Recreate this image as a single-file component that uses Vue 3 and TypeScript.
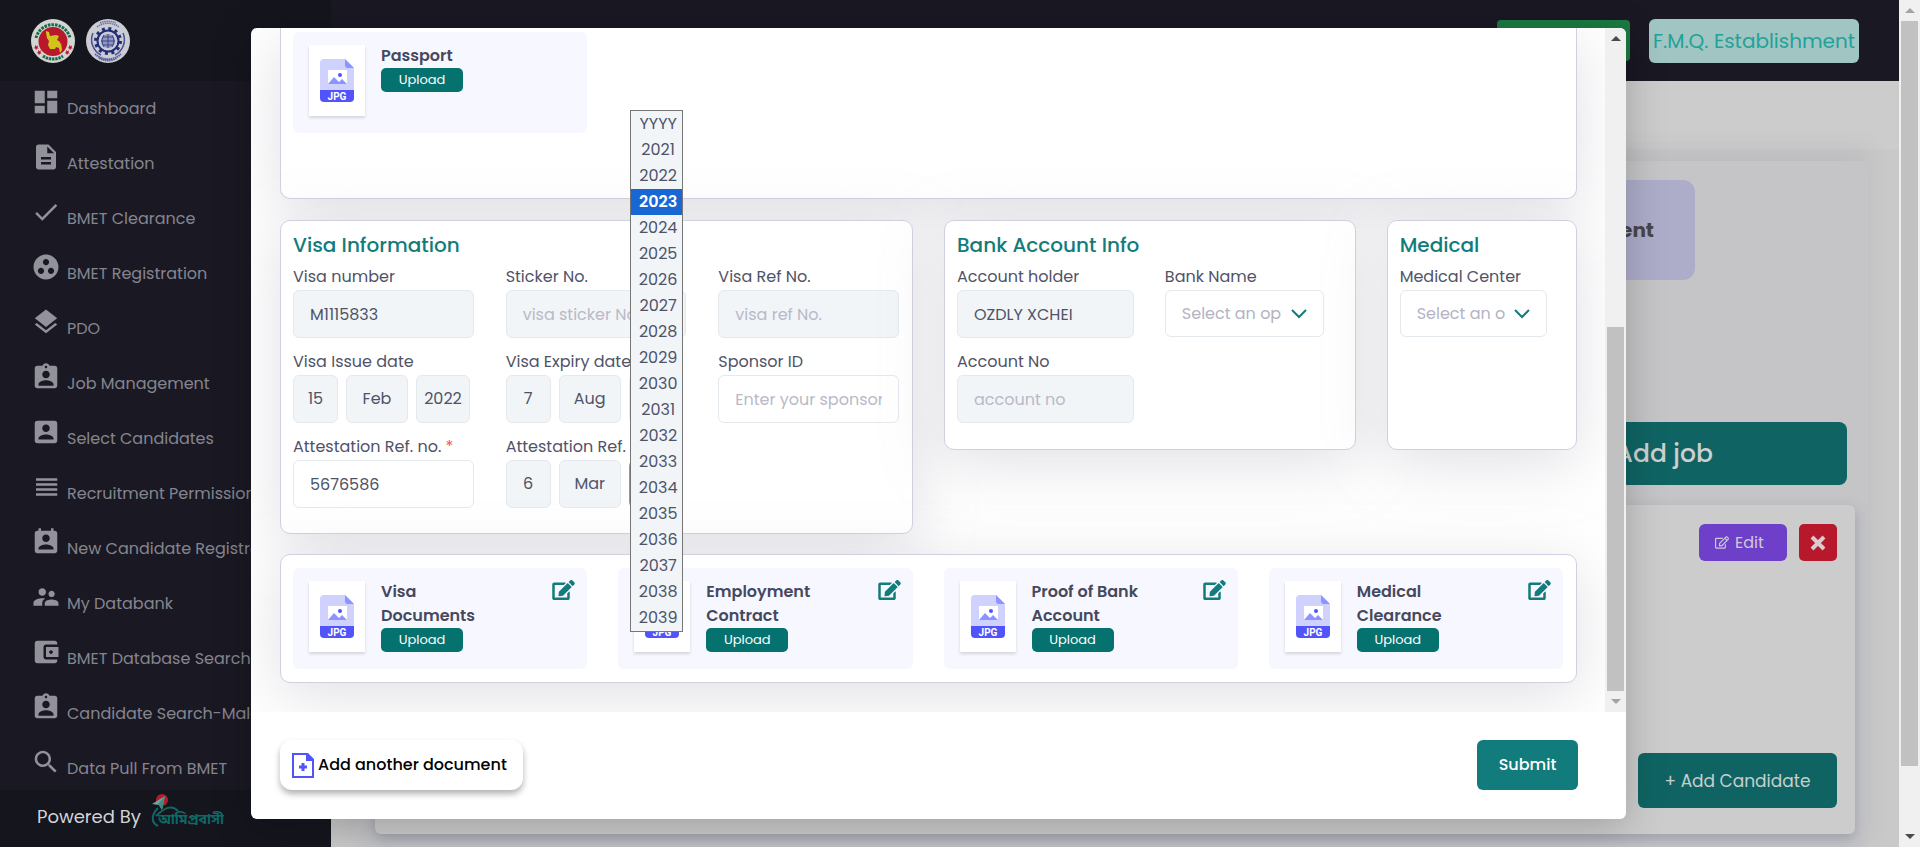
<script setup lang="ts">
import { ref } from 'vue'

interface NavItem { label: string; path: string }

const assignmentInd = 'M19 3h-4.18C14.4 1.84 13.3 1 12 1c-1.3 0-2.4.84-2.82 2H5c-1.1 0-2 .9-2 2v14c0 1.1.9 2 2 2h14c1.1 0 2-.9 2-2V5c0-1.1-.9-2-2-2zm-7 0c.55 0 1 .45 1 1s-.45 1-1 1-1-.45-1-1 .45-1 1-1zm0 4c1.66 0 3 1.34 3 3s-1.34 3-3 3-3-1.34-3-3 1.34-3 3-3zm6 12H6v-1.4c0-2 4-3.1 6-3.1s6 1.1 6 3.1V19z'

const navItems: NavItem[] = [
  { label: 'Dashboard', path: 'M3 13h8V3H3v10zm0 8h8v-6H3v6zm10 0h8V11h-8v10zm0-18v6h8V3h-8z' },
  { label: 'Attestation', path: 'M14 2H6c-1.1 0-1.99.9-1.99 2L4 20c0 1.1.89 2 1.99 2H18c1.1 0 2-.9 2-2V8l-6-6zm2 16H8v-2h8v2zm0-4H8v-2h8v2zm-3-5V3.5L18.5 9H13z' },
  { label: 'BMET Clearance', path: 'M9 16.2L4.8 12l-1.4 1.4L9 19 21 7l-1.4-1.4L9 16.2z' },
  { label: 'BMET Registration', path: 'M12 2C6.48 2 2 6.48 2 12s4.48 10 10 10 10-4.48 10-10S17.52 2 12 2zM8 17.5c-1.38 0-2.5-1.12-2.5-2.5s1.12-2.5 2.5-2.5 2.5 1.12 2.5 2.5-1.12 2.5-2.5 2.5zM9.5 8c0-1.38 1.12-2.5 2.5-2.5s2.5 1.12 2.5 2.5-1.12 2.5-2.5 2.5S9.5 9.38 9.5 8zm6.5 9.5c-1.38 0-2.5-1.12-2.5-2.5s1.12-2.5 2.5-2.5 2.5 1.12 2.5 2.5-1.12 2.5-2.5 2.5z' },
  { label: 'PDO', path: 'M11.99 18.54l-7.37-5.73L3 14.07l9 7 9-7-1.63-1.27-7.38 5.74zM12 16l7.36-5.73L21 9l-9-7-9 7 1.63 1.27L12 16z' },
  { label: 'Job Management', path: assignmentInd },
  { label: 'Select Candidates', path: 'M3 5v14c0 1.1.89 2 2 2h14c1.1 0 2-.9 2-2V5c0-1.1-.9-2-2-2H5c-1.11 0-2 .9-2 2zm12 4c0 1.66-1.34 3-3 3s-3-1.34-3-3 1.34-3 3-3 3 1.34 3 3zm-9 8c0-2 4-3.1 6-3.1s6 1.1 6 3.1v1H6v-1z' },
  { label: 'Recruitment Permission', path: 'M4 15h17v-2H4v2zm0 4h17v-2H4v2zm0-8h17V9H4v2zm0-6v2h17V5H4z' },
  { label: 'New Candidate Registration', path: 'M19 3h-1V1h-2v2H8V1H6v2H5c-1.11 0-2 .9-2 2v14c0 1.1.89 2 2 2h14c1.1 0 2-.9 2-2V5c0-1.1-.9-2-2-2zm-7 3c1.66 0 3 1.34 3 3s-1.34 3-3 3-3-1.34-3-3 1.34-3 3-3zm6 12H6v-1c0-2 4-3.1 6-3.1s6 1.1 6 3.1v1z' },
  { label: 'My Databank', path: 'M16.5 12c1.38 0 2.49-1.12 2.49-2.5S17.88 7 16.5 7C15.12 7 14 8.12 14 9.5s1.12 2.5 2.5 2.5zM9 11c1.66 0 2.99-1.34 2.99-3S10.66 5 9 5C7.34 5 6 6.34 6 8s1.34 3 3 3zm7.5 3c-1.83 0-5.5.92-5.5 2.75V19h11v-2.25c0-1.83-3.67-2.75-5.5-2.75zM9 13c-2.33 0-7 1.17-7 3.5V19h7v-2.25c0-.85.33-2.34 2.37-3.47C10.5 13.1 9.66 13 9 13z' },
  { label: 'BMET Database Search', path: 'M21 18v1c0 1.1-.9 2-2 2H5c-1.11 0-2-.9-2-2V5c0-1.1.89-2 2-2h14c1.1 0 2 .9 2 2v1h-9c-1.11 0-2 .9-2 2v8c0 1.1.89 2 2 2h9zm-9-2h10V8H12v8zm4-2.5c-.83 0-1.5-.67-1.5-1.5s.67-1.5 1.5-1.5 1.5.67 1.5 1.5-.67 1.5-1.5 1.5z' },
  { label: 'Candidate Search-Male', path: assignmentInd },
  { label: 'Data Pull From BMET', path: 'M15.5 14h-.79l-.28-.27C15.41 12.59 16 11.11 16 9.5 16 5.91 13.09 3 9.5 3S3 5.91 3 9.5 5.91 16 9.5 16c1.61 0 3.09-.59 4.23-1.57l.27.28v.79l5 4.99L20.49 19l-4.99-5zm-6 0C7.01 14 5 11.99 5 9.5S7.01 5 9.5 5 14 7.01 14 9.5 11.99 14 9.5 14z' },
]

const editPath = 'M402.6 83.2l90.2 90.2c3.8 3.8 3.8 10 0 13.8L274.4 405.6l-92.8 10.3c-12.4 1.4-22.9-9.1-21.5-21.5l10.3-92.8L388.8 83.2c3.8-3.8 10-3.8 13.8 0zm162-22.9l-48.8-48.8c-15.2-15.2-39.9-15.2-55.2 0l-35.4 35.4c-3.8 3.8-3.8 10 0 13.8l90.2 90.2c3.8 3.8 10 3.8 13.8 0l35.4-35.4c15.2-15.3 15.2-40 0-55.2zM384 346.2V448H64V128h229.8c3.2 0 6.2-1.3 8.5-3.5l40-40c7.6-7.6 2.2-20.5-8.5-20.5H48C21.5 64 0 85.5 0 112v352c0 26.5 21.5 48 48 48h352c26.5 0 48-21.5 48-48V306.2c0-10.7-12.9-16-20.5-8.5l-40 40c-2.2 2.3-3.5 5.3-3.5 8.5z'
const editOutlinePath = 'M402.3 344.9l32-32c5-5 13.7-1.5 13.7 5.7V464c0 26.5-21.5 48-48 48H48c-26.5 0-48-21.5-48-48V112c0-26.5 21.5-48 48-48h273.5c7.1 0 10.7 8.6 5.7 13.7l-32 32c-1.5 1.5-3.5 2.3-5.7 2.3H48v352h352V350.5c0-2.1.8-4.1 2.3-5.6zm156.6-201.8L296.3 405.7l-90.4 10c-26.2 2.9-48.5-19.2-45.6-45.6l10-90.4L432.9 17.1c22.9-22.9 59.9-22.9 82.7 0l43.2 43.2c22.9 22.9 22.9 60 .1 82.8zM460.1 174L402 115.9 216.2 301.8l-7.3 65.3 65.3-7.3L460.1 174zm64.8-79.7l-43.2-43.2c-4.1-4.1-10.8-4.1-14.8 0L436 82l58.1 58.1 30.9-30.9c4-4.2 4-10.8-.1-14.9z'

const passportDocs = [{ lines: ['Passport'], editable: false }]
const visaDocs = [
  { lines: ['Visa', 'Documents'], editable: true },
  { lines: ['Employment', 'Contract'], editable: true },
  { lines: ['Proof of Bank', 'Account'], editable: true },
  { lines: ['Medical', 'Clearance'], editable: true },
]
const docSections = { passport: passportDocs, visa: visaDocs }

const years: string[] = ['YYYY', ...Array.from({ length: 19 }, (_, i) => String(2021 + i))]
const visaNumber = ref('M1115833')
const attestationRef = ref('5676586')
const accountHolder = ref('OZDLY XCHEI')
const attestationYear = ref('2023')
</script>

<template>
  <div class="page">
    <aside class="sidebar">
      <div class="brand">
        <svg width="44" height="44" viewBox="0 0 44 44" role="img" aria-label="Government seal">
          <circle cx="22" cy="22" r="22" fill="#d3d5d2" />
          <path d="M5 19a17.500 17.500 0 0 1 34 0" fill="none" stroke="#1b6a4c" stroke-width="3" stroke-dasharray="2.600 1" />
          <path d="M12 37a18 18 0 0 0 20 0" fill="none" stroke="#1b6a4c" stroke-width="3" stroke-dasharray="2.4 .8" />
          <circle cx="22" cy="22.5" r="14.5" fill="#b7192b" />
          <path d="M15 12l3 1 1 4 6-1 3 1-2 4 3 2v3l1-3 1 8-2 3-1-5-3-1-1 2-5 0-2-4 1-4-2-3-1-5z" fill="#d2c21c" />
          <path d="M4 26l1.5 1.2 1.5-1-.5 2 1.3 1.2-1.8.2-1 1.7-.6-1.9-1.7-.4 1.5-1zM7 31l1.5 1.2 1.5-1-.5 2 1.3 1.2-1.8.2-1 1.7-.6-1.9-1.7-.4 1.5-1zM38 26l1.5 1.2 1.5-1-.5 2 1.3 1.2-1.8.2-1 1.7-.6-1.9-1.7-.4 1.5-1zM35 31l1.5 1.2 1.5-1-.5 2 1.3 1.2-1.8.2-1 1.7-.6-1.9-1.7-.4 1.5-1z" fill="#b7192b" />
        </svg>
        <svg width="44" height="44" viewBox="0 0 44 44" role="img" aria-label="Bureau seal">
          <circle cx="22" cy="22" r="22" fill="#cccdd2" />
          <path d="M7 14a17 17 0 0 0 8 22M37 14a17 17 0 0 1-8 22" fill="none" stroke="#4a5195" stroke-width="1.500" />
          <path d="M11 8a18 18 0 0 1 22 0M14 4a20 20 0 0 1 16 0" fill="none" stroke="#6c72a8" stroke-width="1.500" stroke-dasharray="1.5 .7" />
          <path d="M9 35a19 19 0 0 0 26 0M13 39a18 18 0 0 0 18 0" fill="none" stroke="#5a61a0" stroke-width="2" stroke-dasharray="1.5 .6" />
          <circle cx="22" cy="22" r="12.5" fill="none" stroke="#222d78" stroke-width="3" stroke-dasharray="3 3.54" />
          <circle cx="22" cy="22" r="10.5" fill="none" stroke="#222d78" stroke-width="2" />
          <circle cx="22" cy="22" r="7" fill="#9397bd" />
          <path d="M15 22h14M17 18h10M17 26h10M22 15v14M18 16q-4 6 0 12M26 16q4 6 0 12" fill="none" stroke="#3c4590" stroke-width="1" />
        </svg>
      </div>
      <nav class="nav" aria-label="Main">
        <a v-for="item in navItems" :key="item.label" class="nav-item" href="#">
          <svg class="nav-icon" viewBox="0 0 24 24" aria-hidden="true"><path :d="item.path" fill="currentColor" /></svg>
          <span class="nav-label">{{ item.label }}</span>
        </a>
      </nav>
      <div class="powered">
        <span>Powered By</span>
        <svg class="partner" width="68" height="40" viewBox="0 0 68 40" role="img" aria-label="Ami Probashi">
          <circle cx="10" cy="6" r="6" fill="#b01c2c" />
          <path d="M0 10L13 2l-3 14-3-5-7-1z" fill="#6fa69b" />
          <path d="M6 10l7-8-3 14z" fill="#3f8a80" />
          <path d="M6 14c-6 6-8 14 0 18M4 22c8-8 16-12 22-5" fill="none" stroke="#0f6865" stroke-width="2" />
          <text x="6" y="30" font-size="14" font-weight="700" fill="#0f6865" font-family="'Noto Sans Bengali', 'Noto Sans', sans-serif">আমিপ্রবাসী</text>
        </svg>
      </div>
    </aside>

    <main class="main">
      <header class="topbar">
        <button class="top-green" type="button" aria-label="Recruitment"></button>
        <button class="top-user" type="button">F.M.Q. Establishment</button>
      </header>
      <div class="subbar"></div>
      <div class="content">
        <a class="tile" href="#">Recruitment</a>
        <button class="add-job" type="button">+ Add job</button>
        <section class="job-card">
          <div class="job-actions">
            <button class="edit-btn" type="button">
              <svg width="14" height="13" viewBox="0 0 576 512" aria-hidden="true"><path :d="editOutlinePath" fill="currentColor" /></svg>
              Edit
            </button>
            <button class="delete-btn" type="button" aria-label="Delete">
              <svg width="16" height="16" viewBox="0 0 16 16" aria-hidden="true"><path d="M2 2l12 12M14 2L2 14" stroke="currentColor" stroke-width="4" /></svg>
            </button>
          </div>
          <button class="add-candidate" type="button">+ Add Candidate</button>
        </section>
      </div>
    </main>

    <div class="bar bar-page" aria-hidden="true">
      <i class="arrow up muted"></i>
      <i class="thumb thumb-page"></i>
      <i class="arrow down push"></i>
    </div>

    <div class="overlay">
      <div class="modal" role="dialog" aria-label="Candidate documents">
        <div class="modal-body">
          <div class="scroll">
            <section class="panel panel-top docs">
              <article v-for="doc in docSections.passport" :key="doc.lines[0]" class="doc">
                <div class="thumb-box">
                  <svg width="34" height="43" viewBox="0 0 34 43" aria-hidden="true">
                    <path d="M4 0h21l9 9v22H0V4q0-4 4-4z" fill="#cfd1ff" />
                    <path d="M25 0l9 9h-6q-3 0-3-3z" fill="#8b94ff" />
                    <path d="M0 31h34v8q0 4-4 4H4q-4 0-4-4z" fill="#5254fb" />
                    <path d="M8 11h19v14H8z" fill="#fff" />
                    <path d="M8 25l6-7 5 5 3-3 5 5z" fill="#8b94ff" />
                    <circle cx="20" cy="16" r="2" fill="#5254fb" />
                    <text class="jpg" x="17" y="41" text-anchor="middle">JPG</text>
                  </svg>
                </div>
                <div class="doc-info">
                  <span v-for="line in doc.lines" :key="line" class="doc-line">{{ line }}</span>
                  <button class="upload" type="button">Upload</button>
                </div>
              </article>
            </section>

            <div class="row">
              <section class="panel span-6">
                <h2>Visa Information</h2>
                <div class="fields three">
                  <div class="field"><label for="vno">Visa number</label><input id="vno" v-model="visaNumber" class="grey" type="text" /></div>
                  <div class="field"><label for="stk">Sticker No.</label><input id="stk" class="grey" type="text" placeholder="visa sticker No." /></div>
                  <div class="field"><label for="vref">Visa Ref No.</label><input id="vref" class="grey" type="text" placeholder="visa ref No." /></div>

                  <div class="field">
                    <label for="issue">Visa Issue date</label>
                    <div class="date">
                      <select id="issue" class="grey day"><option>15</option></select>
                      <select class="grey month" aria-label="Issue month"><option>Feb</option></select>
                      <select class="grey year" aria-label="Issue year"><option>2022</option></select>
                    </div>
                  </div>
                  <div class="field">
                    <label for="expiry">Visa Expiry date</label>
                    <div class="date">
                      <select id="expiry" class="grey day"><option>7</option></select>
                      <select class="grey month" aria-label="Expiry month"><option>Aug</option></select>
                      <select class="grey year" aria-label="Expiry year"><option>2022</option></select>
                    </div>
                  </div>
                  <div class="field"><label for="sponsor">Sponsor ID</label><input id="sponsor" type="text" placeholder="Enter your sponsor ID" /></div>

                  <div class="field"><label for="aref">Attestation Ref. no. <span class="req">*</span></label><input id="aref" v-model="attestationRef" type="text" /></div>
                  <div class="field">
                    <label for="adate">Attestation Ref.</label>
                    <div class="date">
                      <select id="adate" class="grey day"><option>6</option></select>
                      <select class="grey month" aria-label="Attestation month"><option>Mar</option></select>
                      <div class="year-wrap">
                        <select v-model="attestationYear" class="grey year focused" aria-label="Attestation year">
                          <option v-for="y in years" :key="y">{{ y }}</option>
                        </select>
                        <ul class="menu" role="listbox" aria-label="Year">
                          <li v-for="y in years" :key="y" role="option" :aria-selected="y === attestationYear" :class="{ selected: y === attestationYear }" @click="attestationYear = y">{{ y }}</li>
                        </ul>
                      </div>
                    </div>
                  </div>
                </div>
              </section>

              <section class="panel span-4">
                <h2>Bank Account Info</h2>
                <div class="fields two">
                  <div class="field"><label for="holder">Account holder</label><input id="holder" v-model="accountHolder" class="grey" type="text" /></div>
                  <div class="field">
                    <label for="bank">Bank Name</label>
                    <div class="picker">
                      <select id="bank"><option>Select an option</option></select>
                      <svg width="16" height="10" viewBox="0 0 16 10" aria-hidden="true"><path d="M1 1l7 7 7-7" fill="none" stroke="currentColor" stroke-width="2" /></svg>
                    </div>
                  </div>
                  <div class="field"><label for="accno">Account No</label><input id="accno" class="grey" type="text" placeholder="account no" /></div>
                </div>
              </section>

              <section class="panel span-2">
                <h2>Medical</h2>
                <div class="field">
                  <label for="center">Medical Center</label>
                  <div class="picker">
                    <select id="center"><option>Select an option</option></select>
                    <svg width="16" height="10" viewBox="0 0 16 10" aria-hidden="true"><path d="M1 1l7 7 7-7" fill="none" stroke="currentColor" stroke-width="2" /></svg>
                  </div>
                </div>
              </section>
            </div>

            <section class="panel docs">
              <article v-for="doc in docSections.visa" :key="doc.lines[0]" class="doc">
                <div class="thumb-box">
                  <svg width="34" height="43" viewBox="0 0 34 43" aria-hidden="true">
                    <path d="M4 0h21l9 9v22H0V4q0-4 4-4z" fill="#cfd1ff" />
                    <path d="M25 0l9 9h-6q-3 0-3-3z" fill="#8b94ff" />
                    <path d="M0 31h34v8q0 4-4 4H4q-4 0-4-4z" fill="#5254fb" />
                    <path d="M8 11h19v14H8z" fill="#fff" />
                    <path d="M8 25l6-7 5 5 3-3 5 5z" fill="#8b94ff" />
                    <circle cx="20" cy="16" r="2" fill="#5254fb" />
                    <text class="jpg" x="17" y="41" text-anchor="middle">JPG</text>
                  </svg>
                </div>
                <div class="doc-info">
                  <span v-for="line in doc.lines" :key="line" class="doc-line">{{ line }}</span>
                  <button class="upload" type="button">Upload</button>
                </div>
                <button class="doc-edit" type="button" :aria-label="'Edit ' + doc.lines.join(' ')">
                  <svg width="23" height="20" viewBox="0 0 576 512" aria-hidden="true"><path :d="editPath" fill="currentColor" /></svg>
                </button>
              </article>
            </section>
          </div>
          <div class="bar" aria-hidden="true">
            <i class="arrow up"></i>
            <i class="thumb thumb-modal"></i>
            <i class="arrow down muted"></i>
          </div>
        </div>
        <footer class="modal-foot">
          <button class="add-doc" type="button">
            <svg width="22" height="25" viewBox="0 0 22 25" aria-hidden="true">
              <path d="M0 0h16l6 6v19H0zM2 2v21h18V8h-6V2z" fill="#5254fb" fill-rule="evenodd" />
              <path d="M7 14h8M11 10v8" stroke="#5254fb" stroke-width="3" />
            </svg>
            Add another document
          </button>
          <button class="submit" type="button">Submit</button>
        </footer>
      </div>
    </div>
  </div>
</template>

<style>
body { margin: 0; overflow: hidden; }
</style>

<style scoped>
* { box-sizing: border-box; }
.page {
  position: relative;
  display: flex;
  height: 100vh;
  overflow: hidden;
  background: #c9c9ca;
  font-family: Poppins, Inter, "Noto Sans", sans-serif;
  font-size: 16px;
  line-height: 24px;
  color: #4f5368;
}
button, input, select { font: inherit; margin: 0; }
button { border: 0; cursor: pointer; }
a { text-decoration: none; }
svg { display: block; flex: none; }

.sidebar { display: flex; flex-direction: column; flex: none; width: 331px; background: #1a1923; }
.brand { display: flex; flex: none; align-items: center; gap: 11px; height: 81px; padding-left: 31px; background: #15151e; }
.nav { flex: 1; min-height: 0; overflow: hidden; }
.nav-item { display: flex; gap: 6px; height: 55px; padding: 6px 0 0 31px; color: #85858f; white-space: nowrap; }
.nav-icon { width: 30px; height: 30px; color: #92929b; }
.nav-label { padding-top: 10px; }
.powered { display: flex; flex: none; align-items: flex-start; gap: 11px; height: 57px; padding: 4px 0 0 37px; background: #15151e; color: #d4d4d6; font-size: 18px; line-height: 46px; white-space: nowrap; }
.partner { overflow: visible; }

.main { display: flex; flex: 1; flex-direction: column; min-width: 0; }
.topbar { display: flex; flex: none; align-items: center; justify-content: flex-end; gap: 19px; height: 81px; padding-right: 40px; background: #191823; }
.top-green { width: 133px; height: 41px; border-radius: 4px; background: #1b7a41; }
.top-user { height: 44px; width: 210px; padding: 0; border-radius: 6px; background: #a1c5c2; color: #1fa299; font-size: 20px; white-space: nowrap; }
.subbar { flex: none; height: 68px; background: #cccccc; }
.content { display: flex; flex: 1; flex-direction: column; align-items: flex-end; margin: 12px 31px 0 25px; padding: 19px 13px 0 19px; background: #c5c5c8; box-shadow: 0 -12px 20px rgba(110, 110, 120, .12); }
.tile { display: flex; align-items: center; justify-content: flex-end; width: 300px; height: 100px; margin: 0 160px 142px 0; padding-right: 41px; border-radius: 12px; background: #adadca; color: #47474b; font-size: 20px; font-weight: 700; }
.add-job { width: 390px; height: 63px; margin: 0 8px 20px 0; border-radius: 8px; background: #0f6463; color: #cfcfcf; font-size: 25px; font-weight: 500; }
.job-card { display: flex; flex-direction: column; align-items: flex-end; justify-content: space-between; align-self: stretch; height: 329px; padding: 19px 18px 26px; border-radius: 6px; background: #cccccc; box-shadow: 0 5px 14px rgba(80, 90, 110, .35); }
.job-actions { display: flex; gap: 12px; }
.edit-btn { display: flex; align-items: center; gap: 6px; width: 88px; height: 37px; padding: 0 16px; border-radius: 6px; background: #6e3fc8; color: #cfcbd6; }
.delete-btn { display: flex; align-items: center; justify-content: center; width: 38px; height: 37px; border-radius: 5px; padding: 0; background: #b8182c; color: #d6cbcd; }
.add-candidate { width: 199px; height: 55px; padding: 0; border-radius: 6px; background: #0f6463; color: #c6cfce; font-size: 17px; }

.bar { display: flex; flex: none; flex-direction: column; align-items: center; width: 21px; background: #f0f0f0; }
.thumb { width: 17px; background: #c1c1c1; }
.thumb-page { flex: 0 0 745px; }
.thumb-modal { flex: 1; margin-top: 278px; }
.arrow { display: flex; flex: none; align-items: center; justify-content: center; width: 21px; height: 21px; }
.arrow::before { content: ""; border: 5px solid transparent; }
.arrow.up::before { border-top-width: 0; border-bottom-color: #4a4a4a; }
.arrow.down::before { border-bottom-width: 0; border-top-color: #4a4a4a; }
.arrow.up.muted::before { border-bottom-color: #a3a3a3; }
.arrow.down.muted::before { border-top-color: #a3a3a3; }
.push { margin-top: auto; }

.overlay { position: absolute; inset: 0; padding: 28px 294px 28px 251px; }
.modal { display: flex; flex-direction: column; height: 100%; overflow: hidden; border-radius: 6px; background: #ffffff; box-shadow: 0 8px 40px rgba(0, 0, 0, .22); }
.modal-body { display: flex; flex: 1; min-height: 0; overflow: hidden; }
.scroll { display: flex; flex: 1; flex-direction: column; justify-content: flex-end; gap: 20px; min-width: 0; padding: 0 28px 29px 29px; overflow: hidden; }
.panel { padding: 12px 13px 12px 12px; border: 1px solid #d0d0e1; border-radius: 10px; background: #ffffff; box-shadow: 0 13px 61px rgba(169, 169, 184, .36); }
.panel-top { height: 171px; margin-bottom: 1px; border-top: 0; border-radius: 0 0 10px 10px; }
.docs { display: grid; flex: none; grid-template-columns: repeat(4, 1fr); align-items: start; gap: 31px; padding-top: 13px; }
.docs.panel-top { padding-top: 4px; }
.docs:not(.panel-top) { height: 129px; }
.row { display: grid; flex: none; grid-template-columns: repeat(12, 1fr); align-items: start; column-gap: 31px; }
.span-6 { grid-column: span 6; height: 314px; }
.span-4 { grid-column: span 4; height: 230px; }
.span-2 { grid-column: span 2; height: 230px; }
.row .panel { padding-top: 9px; }
h2 { margin: 0 0 5px; color: #127c7c; font-size: 20px; font-weight: 500; line-height: 30px; white-space: nowrap; }
.fields { display: grid; gap: 12px 31px; }
.three { grid-template-columns: repeat(3, 1fr); column-gap: 32px; }
.two { grid-template-columns: repeat(2, 1fr); }
.field { display: flex; flex-direction: column; height: 73px; min-width: 0; }
label { margin-bottom: 1px; white-space: nowrap; }
.req { color: #fb4f5f; }
input, select { width: 100%; height: 48px; padding: 0 16px; border: 1px solid #e4e9ee; border-radius: 6px; outline: 0; background: #ffffff; color: #4f5368; }
input::placeholder { color: #b9b9c8; opacity: 1; }
.grey { background: #f1f5f8; }
select { appearance: none; }
.date { display: flex; gap: 8px; }
.date select { padding: 0; text-align: center; text-align-last: center; }
.date .day { width: 45px; }
.date .month { width: 62px; }
.date .year { width: 54px; }
.year-wrap { position: relative; }
.focused { border-color: #7d93e8; }
.menu { position: absolute; z-index: 5; bottom: -124px; left: 1px; width: 53px; margin: 0; padding: 0; border: 1px solid #767676; background: #f1f5f8; list-style: none; }
.menu li { height: 26px; padding-left: 4px; line-height: 26px; text-align: center; }
.menu .selected { background: #1967d2; color: #ffffff; font-weight: 600; }
.picker { display: flex; align-items: center; width: 90%; height: 47px; padding-right: 16px; border: 1px solid #e4e9ee; border-radius: 6px; color: #127c7c; }
.picker select { flex: 1; min-width: 0; height: 40px; padding: 0 0 0 16px; border: 0; background: transparent; color: #b3b3c4; }
.picker svg { margin-left: 9px; }

.doc { display: flex; height: 101px; padding: 12px 12px 0 16px; border-radius: 6px; background: #f7f7ff; }
.panel-top .doc { grid-column: 1; }
.thumb-box { display: flex; flex: none; align-items: center; justify-content: center; width: 56px; height: 71px; margin-top: 1px; background: #ffffff; box-shadow: 0 2px 3px rgba(0, 0, 0, .14); }
.jpg { fill: #ffffff; font-family: Roboto, sans-serif; font-size: 10px; font-weight: 700; }
.doc-info { display: flex; flex: 1; flex-direction: column; align-items: flex-start; margin-left: 16px; color: #45495e; font-weight: 600; white-space: nowrap; }
.upload { width: 82px; height: 24px; padding: 0; border-radius: 5px; background: #067270; color: #ffffff; font-size: 13px; font-weight: 400; line-height: 20px; }
.doc-edit { height: 20px; padding: 0; background: transparent; color: #127c7c; }

.modal-foot { display: flex; flex: none; justify-content: space-between; align-items: flex-start; height: 107px; padding: 28px 48px 0 29px; }
.add-doc { display: flex; align-items: center; gap: 4px; width: 243px; height: 50px; padding: 0 0 0 12px; border-radius: 12px; background: #ffffff; color: #000000; font-weight: 500; white-space: nowrap; box-shadow: 0 4px 6px rgba(0, 0, 0, .3); }
.submit { width: 101px; height: 50px; padding: 0; border-radius: 6px; background: #127c7c; color: #ffffff; font-weight: 500; }
</style>
